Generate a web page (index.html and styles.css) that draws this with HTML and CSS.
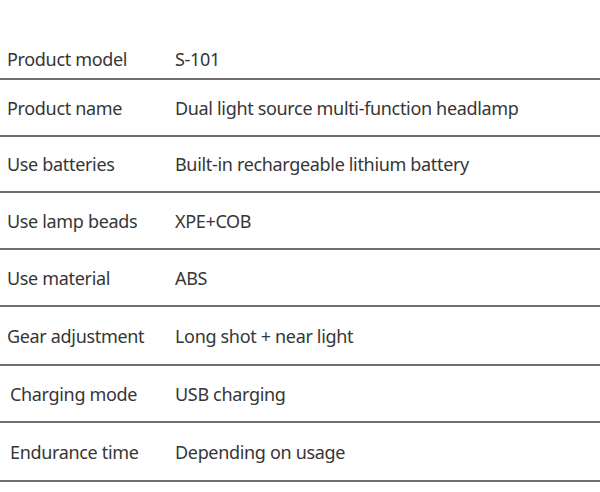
FILE: index.html
```html
<!DOCTYPE html>
<html>
<head>
<meta charset="utf-8">
<link rel="stylesheet" href="styles.css">
</head>
<body>
<div class="spec">
  <div class="row"><div class="label">Product model</div><div class="value">S-101</div></div>
  <div class="row"><div class="label">Product name</div><div class="value">Dual light source multi-function headlamp</div></div>
  <div class="row"><div class="label">Use batteries</div><div class="value">Built-in rechargeable lithium battery</div></div>
  <div class="row"><div class="label">Use lamp beads</div><div class="value">XPE+COB</div></div>
  <div class="row"><div class="label">Use material</div><div class="value">ABS</div></div>
  <div class="row"><div class="label">Gear adjustment</div><div class="value">Long shot + near light</div></div>
  <div class="row"><div class="label indent">Charging mode</div><div class="value">USB charging</div></div>
  <div class="row"><div class="label indent">Endurance time</div><div class="value">Depending on usage</div></div>
</div>
</body>
</html>
```
FILE: styles.css
```css
html, body {
  margin: 0;
  padding: 0;
  background: #ffffff;
}
body {
  width: 600px;
  height: 492px;
  overflow: hidden;
  font-family: "Noto Sans", "Open Sans", sans-serif;
  font-size: 18px;
  letter-spacing: -0.33px;
  color: #363636;
}
.spec {
  padding-top: 39px;
  display: grid;
  grid-template-rows: 41px 57px 56px 57px 57px 59px 57px 59px;
}
.row {
  display: grid;
  grid-template-columns: 175px 1fr;
  align-items: center;
  border-bottom: 2px solid #6e6e6e;
  box-sizing: border-box;
}
.label {
  padding-left: 7px;
}
.label.indent {
  padding-left: 10px;
}
```
